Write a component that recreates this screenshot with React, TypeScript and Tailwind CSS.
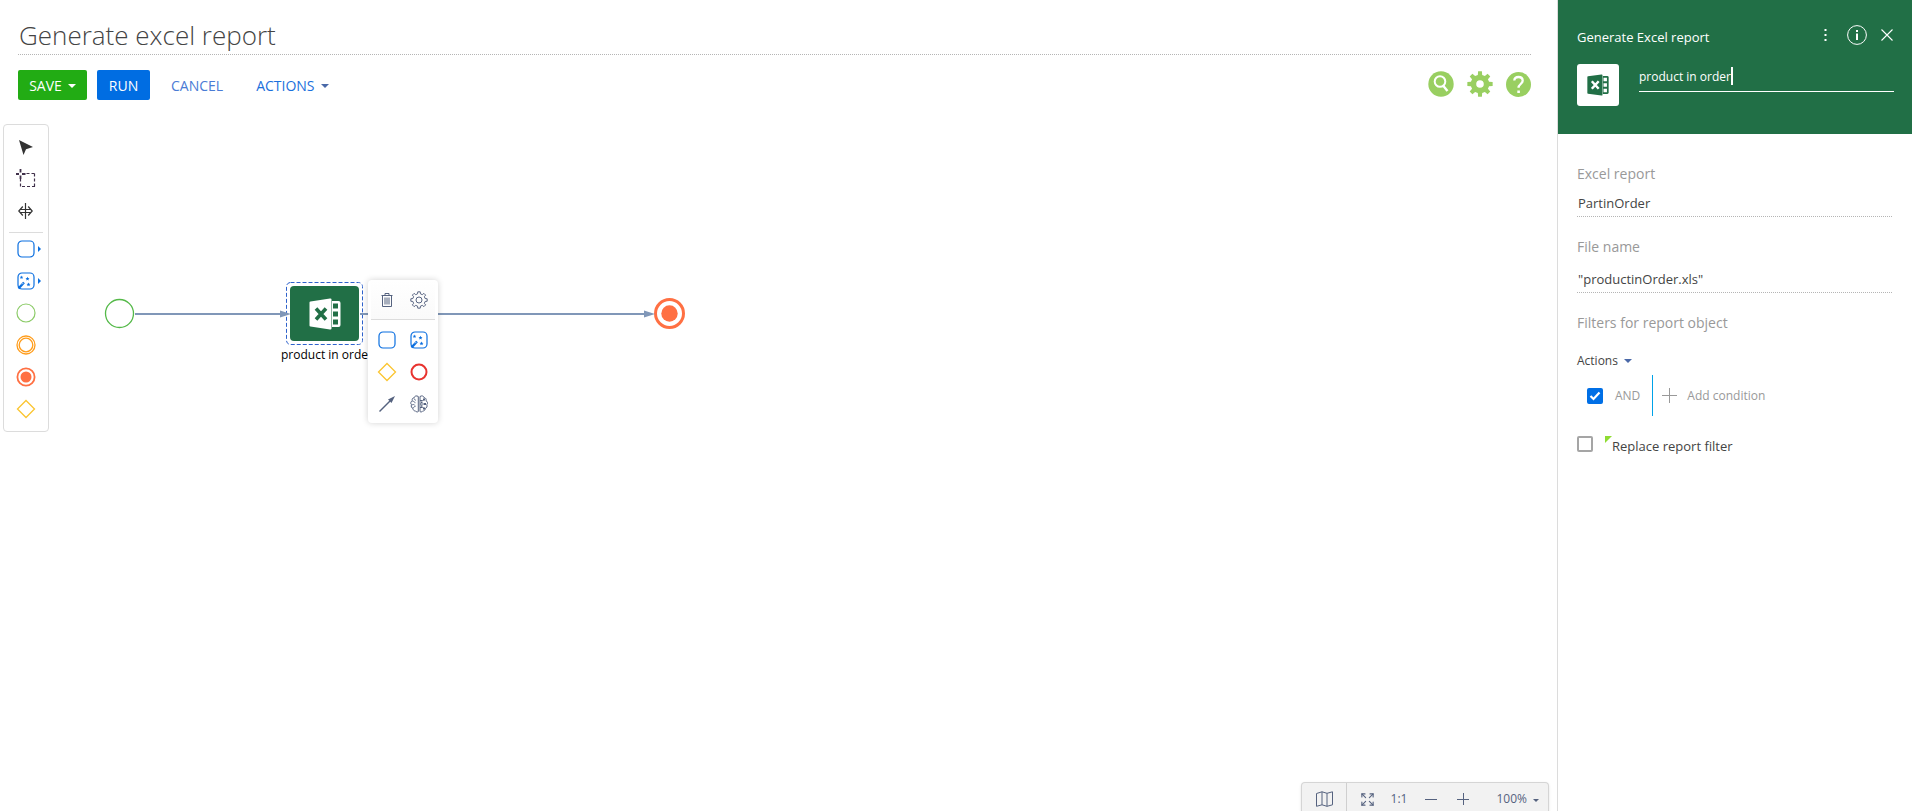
import { useState } from "react";
import type { ReactNode } from "react";
import { Expand } from "lucide-react";

// Outline of a cog, teeth spread evenly round the centre of a 24x24 box
function gearPath(teeth: number, outer: number, inner: number) {
  const step = (Math.PI * 2) / teeth;
  const points: string[] = [];
  for (let i = 0; i < teeth; i++) {
    const a = i * step;
    [
      [a - step * 0.3, inner],
      [a - step * 0.19, outer],
      [a + step * 0.19, outer],
      [a + step * 0.3, inner],
    ].forEach(([angle, r]) => {
      points.push(`${(12 + r * Math.sin(angle)).toFixed(2)} ${(12 - r * Math.cos(angle)).toFixed(2)}`);
    });
  }
  return `M${points.join("L")}Z`;
}

function Caret({ className = "" }: { className?: string }) {
  return (
    <svg className={`h-1 w-2 ${className}`} viewBox="0 0 8 4" fill="currentColor">
      <path d="M0 0h8L4 4z" />
    </svg>
  );
}

function ExcelIcon({ className, cell }: { className: string; cell: string }) {
  return (
    <svg className={className} viewBox="0 0 32 32" fill="currentColor">
      <path d="M1.5 3.4 21 .6q1.5-.2 1.5 1v28.8q0 1.200-1.500 1L1.500 28.600Q.5 28.500.5 27.500v-23q0-1 1-1.100z" />
      <path d="M23 3h6.500q2 0 2 2v22q0 2-2 2H23z" />
      <path d="M7 10.500 17 21.500M17 10.500 7 21.500" stroke={cell} strokeWidth="3.600" />
      <path d="M24 5.500h5v5h-5zM24 13.500h5v5h-5zM24 21.500h5v5h-5z" fill={cell} />
    </svg>
  );
}

function TaskIcon() {
  return (
    <svg className="size-[18px]" viewBox="0 0 18 18" fill="none" stroke="#0b6fe0">
      <rect x="1" y="1" width="16" height="16" rx="4" strokeWidth="1.200" />
    </svg>
  );
}

function WandIcon() {
  return (
    <svg className="size-[18px]" viewBox="0 0 18 18" fill="#0b6fe0" stroke="#0b6fe0">
      <rect x="1" y="1" width="16" height="16" rx="4" fill="none" strokeWidth="1.200" />
      <path d="m1.500 16.500 5.500-6" strokeWidth="2.400" />
      <path d="m5 12.300 1.200-1.200" strokeWidth=".8" stroke="#fff" />
      <path
        stroke="none"
        d="m4.500 3.500.5 1.200 1.300.1-1 .9.3 1.300-1.100-.7-1.100.7.3-1.300-1-.9 1.300-.1zM10.500 4.700l.6 1.300 1.400.1-1.100.9.4 1.400-1.300-.7-1.300.7.4-1.400-1.100-.9 1.400-.1zM11.500 10.500l.6 1.300 1.400.1-1.100.9.4 1.400-1.300-.7-1.300.7.4-1.400-1.100-.9 1.400-.1z"
      />
    </svg>
  );
}

function DiamondIcon() {
  return (
    <svg className="size-5" viewBox="0 0 20 20" fill="none" stroke="#fbc531" strokeWidth="1.300">
      <path d="M10 1.500 18.500 10 10 18.500 1.500 10z" />
    </svg>
  );
}

function BrainIcon() {
  return (
    <svg className="size-[18px]" viewBox="0 0 18 18" fill="none" stroke="currentColor">
      <path d="M8.300 1.500C6.500.3 4.500 1 4.200 2.700 2.500 2.800 1.800 4.300 2.300 5.700.6 6.500.3 8.600 1.500 9.700.8 11.300 1.500 13 3 13.400c0 1.700 1.200 2.700 2.600 2.600.6 1 1.800 1.200 2.700.6z" />
      <path d="M10 1.500c1.800-1.200 3.800-.5 4.100 1.200 1.700.1 2.400 1.600 1.900 3 1.700.8 2 2.900.8 4 .7 1.600 0 3.300-1.500 3.700 0 1.700-1.200 2.700-2.600 2.600-.6 1-1.800 1.200-2.700.6z" />
      <path d="M4.200 3.500c0 1 .8 1.700 1.800 1.700M2.500 6.500c1.500-.5 2.500.5 2.500 1.700M2 10c1-.8 2.500-.6 3 .5M3.500 13c0-1 1-1.700 2-1.500" strokeWidth=".9" />
      <path d="M10 5.500h2.500M10 9h4M10 12.500h2.500M12.500 5.500l1.500-1M12.500 12.500l1.500 1" />
      <path d="M13 3.500h2v2h-2zM14 8h2v2h-2zM13 12.500h2v2h-2zM11 6.500h1.500V8H11zM11 10.200h1.500v1.500H11z" fill="currentColor" stroke="none" />
    </svg>
  );
}

function ToolButton({ label, more, children }: { label: string; more?: boolean; children: ReactNode }) {
  return (
    <button type="button" aria-label={label} className="relative flex h-8 w-full items-center justify-center">
      {children}
      {more && (
        <svg className="absolute right-[7px] h-[6px] w-[3px]" viewBox="0 0 3 6" fill="#0b6fe0">
          <path d="M0 0l3 3-3 3z" />
        </svg>
      )}
    </button>
  );
}

function Toolbox() {
  return (
    <div className="ml-[3px] flex h-[308px] w-[46px] shrink-0 flex-col rounded border border-[#dcdcdc] bg-white pt-[6px]">
      <ToolButton label="Select">
        <svg className="size-4" viewBox="0 0 16 16" fill="#333">
          <path d="M1 1l14 7-7 2.200L5.500 16z" />
        </svg>
      </ToolButton>
      <ToolButton label="Select area">
        <svg className="size-5" viewBox="0 0 20 20" fill="none" stroke="#40304a" strokeWidth="1.200">
          <path d="M10.500 4.500H19M18.500 4.500v13M19 17.500H4.500M4.500 17.500V10" strokeDasharray="3 2" />
          <path d="M-1 5h4M6 5h3.500M4.500 0v3.500M4.500 6.500V10" strokeWidth="1.800" />
        </svg>
      </ToolButton>
      <ToolButton label="Move elements">
        <svg className="size-4" viewBox="0 0 16 16" fill="none" stroke="#333" strokeWidth="1.200">
          <path d="M7.500 0v16M4.800 3.500.8 8l4 4.500M10.200 3.500l4 4.500-4 4.500M2.500 6.500h10M2.500 9.500h10" />
        </svg>
      </ToolButton>
      <div className="mx-[5px] mt-[5px] h-px shrink-0 bg-[#dcdcdc]" />
      <ToolButton label="Actions" more>
        <TaskIcon />
      </ToolButton>
      <ToolButton label="System actions" more>
        <WandIcon />
      </ToolButton>
      <ToolButton label="Start events">
        <svg className="size-5" viewBox="0 0 20 20" fill="none" stroke="#8ccb68" strokeWidth="1.200">
          <circle cx="10" cy="10" r="9" />
        </svg>
      </ToolButton>
      <ToolButton label="Intermediate events">
        <svg className="size-5" viewBox="0 0 20 20" fill="none" stroke="#ff9d1c" strokeWidth="1.300">
          <circle cx="10" cy="10" r="9" />
          <circle cx="10" cy="10" r="6.800" />
        </svg>
      </ToolButton>
      <ToolButton label="End events">
        <svg className="size-5" viewBox="0 0 20 20" fill="none" stroke="#ff7043" strokeWidth="1.800">
          <circle cx="10" cy="10" r="8.600" />
          <circle cx="10" cy="10" r="5.500" fill="#ff7043" stroke="none" />
        </svg>
      </ToolButton>
      <ToolButton label="Gateways">
        <DiamondIcon />
      </ToolButton>
    </div>
  );
}

function ElementMenu() {
  return (
    <div className="absolute top-[156px] left-[319px] w-[70px] rounded bg-white px-[3px] pb-[3px] text-[#55627f] shadow-[0_0_6px_rgba(0,0,0,0.18)]">
      <div className="grid h-10 grid-cols-2 place-items-center border-b border-[#dcdcdc] bg-linear-to-b from-white to-[#fafafa]">
        <button type="button" aria-label="Delete">
          <svg className="h-[14px] w-3" viewBox="0 0 12 14" fill="none" stroke="currentColor">
            <path d="M.5 2.500h11M4 2.500v-2h4v2M1.500 2.500v11h9v-11M4 4.500v7M6 4.500v7M8 4.500v7" />
          </svg>
        </button>
        <button type="button" aria-label="Setup">
          <svg className="size-[18px]" viewBox="0 0 24 24" fill="none" stroke="currentColor" strokeWidth="1.300" strokeLinejoin="round">
            <path d={gearPath(8, 11, 8.400)} />
            <circle cx="12" cy="12" r="4" />
          </svg>
        </button>
      </div>
      <div className="mt-1 grid auto-rows-[32px] grid-cols-2 place-items-center">
        <button type="button" aria-label="Add action">
          <TaskIcon />
        </button>
        <button type="button" aria-label="Add system action">
          <WandIcon />
        </button>
        <button type="button" aria-label="Add gateway">
          <DiamondIcon />
        </button>
        <button type="button" aria-label="Add end event">
          <svg className="size-[18px]" viewBox="0 0 18 18" fill="none" stroke="#e8332f" strokeWidth="2">
            <circle cx="9" cy="9" r="7.500" />
          </svg>
        </button>
        <button type="button" aria-label="Add flow">
          <svg className="size-[18px]" viewBox="0 0 18 18" fill="currentColor" stroke="currentColor">
            <path d="M1.500 16.500 12 6" strokeWidth="1.400" />
            <path d="M17 1 10 4.500 13.500 8z" stroke="none" />
          </svg>
        </button>
        <button type="button" aria-label="Change type">
          <BrainIcon />
        </button>
      </div>
    </div>
  );
}

function Diagram() {
  return (
    <div className="relative min-h-[320px] flex-1 overflow-hidden">
      <svg className="absolute inset-0 size-full" fill="none">
        <path d="M86 190h146M314 190h282" stroke="#8097b8" strokeWidth="2" />
        <circle cx="70.500" cy="189.500" r="14" stroke="#54b948" strokeWidth="1.300" />
        <circle cx="620.500" cy="189.500" r="14" stroke="#ff7043" strokeWidth="3" />
        <circle cx="620.500" cy="189.500" r="8.200" fill="#ff7043" />
        <rect x="237.500" y="158.500" width="76" height="62" rx="4" fill="#fff" stroke="#2f62cc" strokeDasharray="4 2" />
        <path d="M231 186.500 242 190l-11 3.500zM595 186.500 606 190l-11 3.500z" fill="#8097b8" />
        <path d="M311 190h8" stroke="#8097b8" strokeWidth="2" />
      </svg>
      <div className="absolute top-[162px] left-[241px] flex h-[55px] w-[69px] items-center justify-center rounded bg-[#216f46] text-white">
        <ExcelIcon className="size-8" cell="#216f46" />
      </div>
      <span className="absolute top-[222px] left-[232px] text-xs leading-[18px] whitespace-nowrap text-black">product in order</span>
      <ElementMenu />
    </div>
  );
}

function ZoomBar() {
  return (
    <div className="mr-2 flex h-[29px] w-[248px] shrink-0 items-center self-end rounded-t border border-b-0 border-[#d5d5d5] bg-[#f2f2f2] pt-1 text-xs text-[#55627f] shadow-sm">
      <button type="button" aria-label="Map" className="-mt-1 flex h-7 w-[45px] items-center justify-center border-r border-[#cfcfcf] pt-1">
        <svg className="h-4 w-[17px]" viewBox="0 0 17 16" fill="none" stroke="currentColor">
          <path d="M.5 2.500 6 .8l5 1.500L16.500.8v13L11 15.300l-5-1.500L.5 15.300zM6 .8v13M11 2.300v13" />
        </svg>
      </button>
      <button type="button" aria-label="Fit to screen" className="ml-2 flex w-6 shrink-0 justify-center">
        <Expand className="size-[15px]" strokeWidth={1.8} />
      </button>
      <button type="button" className="ml-2 w-6">1:1</button>
      <button type="button" aria-label="Zoom out" className="ml-2 flex w-6 justify-center">
        <svg className="size-3" viewBox="0 0 12 12" stroke="currentColor">
          <path d="M0 6.500h12" />
        </svg>
      </button>
      <button type="button" aria-label="Zoom in" className="ml-2 flex w-6 justify-center">
        <svg className="size-3" viewBox="0 0 12 12" stroke="currentColor">
          <path d="M0 6.500h12M6.500 0v12" />
        </svg>
      </button>
      <button type="button" className="ml-auto flex items-center gap-[6px] pr-[9px]">
        100%
        <svg className="mt-[3px] h-[3px] w-[6px]" viewBox="0 0 6 3" fill="currentColor">
          <path d="M0 0h6L3 3z" />
        </svg>
      </button>
    </div>
  );
}

function PropertiesPanel() {
  const [caption, setCaption] = useState("product in order");
  const [report, setReport] = useState("PartinOrder");
  const [fileName, setFileName] = useState('"productinOrder.xls"');
  const [useAnd, setUseAnd] = useState(true);
  const [replaceFilter, setReplaceFilter] = useState(false);

  const label = "block text-sm leading-5 text-[#999]";
  const field = "block h-[26px] w-full border-b border-dotted border-[#b5b5b5] px-px pb-[2px] text-[13px] text-[#444] outline-none";

  return (
    <aside className="w-[355px] shrink-0 border-l border-[#dcdcdc]">
      <header className="h-[134px] bg-[#216f46] pt-[25px] pr-[18px] pl-[19px] text-[13px] text-white">
        <div className="flex h-5 items-center">
          <h2 className="pt-[6px]">Generate Excel report</h2>
          <div className="ml-auto flex items-center pr-px">
            <button type="button" aria-label="More" className="mr-5">
              <svg className="h-[14px] w-[3px]" viewBox="0 0 3 14" fill="currentColor">
                <path d="M.5 1h2v2h-2zM.5 6h2v2h-2zM.5 11h2v2h-2z" />
              </svg>
            </button>
            <button type="button" aria-label="Information" className="mr-[14px]">
              <svg className="size-5" viewBox="0 0 20 20" fill="none" stroke="currentColor">
                <circle cx="10" cy="10" r="9.400" />
                <path d="M10 8.500V15M10 5v2" strokeWidth="2" />
              </svg>
            </button>
            <button type="button" aria-label="Close">
              <svg className="size-3" viewBox="0 0 12 12" stroke="currentColor" strokeWidth="1.100">
                <path d="M.5.5l11 11M11.500.5l-11 11" />
              </svg>
            </button>
          </div>
        </div>
        <div className="mt-[19px] flex gap-5">
          <div className="flex size-[42px] shrink-0 items-center justify-center rounded-[3px] bg-white text-[#216f46]">
            <ExcelIcon className="size-[22px]" cell="#fff" />
          </div>
          <div className="flex h-7 flex-1 items-start border-b border-white pt-[3px]">
            <input
              aria-label="Caption"
              value={caption}
              onChange={(e) => setCaption(e.target.value)}
              className="h-[18px] field-sizing-content border-r-2 border-white pt-px text-xs outline-none"
            />
          </div>
        </div>
      </header>

      <div className="flex flex-col px-5 pt-[30px] pl-[19px]">
        <label htmlFor="report" className={label}>Excel report</label>
        <input id="report" value={report} onChange={(e) => setReport(e.target.value)} className={`mt-[7px] ${field}`} />
        <label htmlFor="file-name" className={`mt-5 ${label}`}>File name</label>
        <input id="file-name" value={fileName} onChange={(e) => setFileName(e.target.value)} className={`mt-[10px] ${field}`} />
        <h3 className={`mt-5 ${label}`}>Filters for report object</h3>

        <button type="button" className="mt-[18px] flex items-center gap-[6px] self-start text-xs leading-5 text-[#444]">
          Actions
          <Caret className="text-[#4a69a8]" />
        </button>

        <div className="mt-1 ml-[10px] flex h-[41px] text-xs text-[#999]">
          <label className="flex items-center gap-3 border-r border-[#00a2e8] pr-3">
            <span className="relative flex size-4">
              <input
                type="checkbox"
                checked={useAnd}
                onChange={(e) => setUseAnd(e.target.checked)}
                className="peer size-4 appearance-none rounded-[2px] border-2 border-[#a5a5a5] checked:border-[#006fe6] checked:bg-[#006fe6]"
              />
              <svg className="pointer-events-none absolute inset-0 hidden size-4 peer-checked:block" viewBox="0 0 16 16" fill="none" stroke="#fff" strokeWidth="2.200">
                <path d="m3.500 8 3 3 6-6.500" />
              </svg>
            </span>
            AND
          </label>
          <button type="button" className="ml-[9px] flex items-center gap-[10px]">
            <svg className="size-[15px]" viewBox="0 0 15 15" stroke="currentColor">
              <path d="M0 7.500h15M7.500 0v15" />
            </svg>
            Add condition
          </button>
        </div>

        <label className="mt-5 flex text-[13px] leading-5 text-[#444]">
          <input
            type="checkbox"
            checked={replaceFilter}
            onChange={(e) => setReplaceFilter(e.target.checked)}
            className="size-4 appearance-none rounded-[2px] border-2 border-[#a5a5a5] checked:bg-[#006fe6]"
          />
          <svg className="ml-3 size-[7px]" viewBox="0 0 7 7" fill="#8fdc32">
            <path d="M0 0h7L0 7z" />
          </svg>
          Replace report filter
        </label>
      </div>
    </aside>
  );
}

export default function App() {
  const [title, setTitle] = useState("Generate excel report");

  return (
    <div className="flex min-h-screen bg-white font-['Open_Sans',sans-serif]">
      <main className="flex min-w-0 flex-1 flex-col">
        <div className="pr-[26px] pl-[18px]">
          <input
            aria-label="Process title"
            value={title}
            onChange={(e) => setTitle(e.target.value)}
            className="h-[55px] w-full border-b border-dotted border-[#b5b5b5] pt-4 pl-px text-[26px] font-light text-[#444] outline-none"
          />
          <div className="mt-[15px] flex h-[30px] items-center text-sm">
            <button type="button" className="flex h-[30px] w-[69px] items-center justify-center gap-[6px] rounded-[2px] bg-[#22ac14] pt-px text-white">
              SAVE
              <Caret />
            </button>
            <button type="button" className="ml-[10px] h-[30px] w-[53px] rounded-[2px] bg-[#006de2] pt-px text-white">RUN</button>
            <button type="button" className="ml-[21px] pt-[2px] text-[#4a7bd5]">CANCEL</button>
            <button type="button" className="ml-[33px] flex items-center gap-[6px] pt-[2px] text-[#1b6fdc]">
              ACTIONS
              <Caret className="text-[#4a69a8]" />
            </button>
            <div className="ml-auto flex items-center gap-[13px] pb-[2px] text-[#99cf61]">
              <button type="button" aria-label="Search">
                <svg className="size-[26px]" viewBox="0 0 26 26" fill="currentColor">
                  <circle cx="13" cy="13" r="12.700" />
                  <g fill="none" stroke="#fff" strokeWidth="2">
                    <circle cx="12" cy="10.500" r="5.300" />
                    <path d="m15 14.500 4.500 5.500" strokeWidth="2.400" />
                  </g>
                </svg>
              </button>
              <button type="button" aria-label="Settings">
                <svg className="size-[26px]" viewBox="0 0 24 24" fill="currentColor">
                  <path fillRule="evenodd" d={`${gearPath(8, 11.800, 8.600)}M12 8.500a3.500 3.500 0 1 0 0 7 3.500 3.500 0 0 0 0-7z`} />
                </svg>
              </button>
              <button type="button" aria-label="Help">
                <svg className="size-[25px]" viewBox="0 0 25 25" fill="currentColor">
                  <circle cx="12.500" cy="12.500" r="12.500" />
                  <path d="M8.300 8.500c.2-2.500 2-3.500 4.200-3.500s4.200 1.300 4.200 3.800c0 3-4.200 3.500-4.200 7" fill="none" stroke="#fff" strokeWidth="2.300" />
                  <path d="M11.300 18.500h2.600v2.500h-2.600z" fill="#fff" />
                </svg>
              </button>
            </div>
          </div>
        </div>
        <div className="mt-6 flex flex-1">
          <Toolbox />
          <Diagram />
        </div>
        <ZoomBar />
      </main>
      <PropertiesPanel />
    </div>
  );
}
